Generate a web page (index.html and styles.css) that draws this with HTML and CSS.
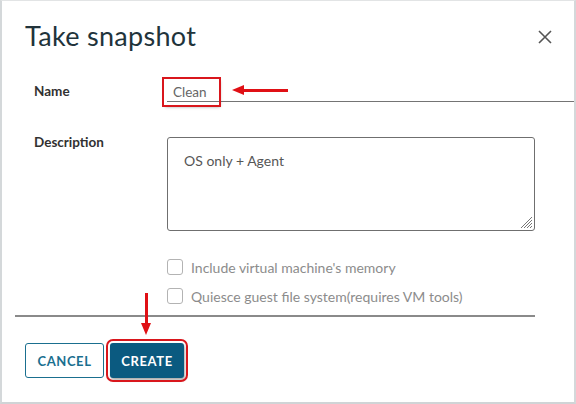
FILE: index.html
```html
<!DOCTYPE html>
<html lang="en">

<head>
    <meta charset="UTF-8">
    <title>Take snapshot</title>
    <link rel="stylesheet" href="styles.css">
</head>

<body>
    <div class="modal">
        <div class="modal-header">
            <h3 class="modal-title">Take snapshot</h3>
            <button class="close" type="button" aria-label="Close">
                <svg width="14" height="14" viewBox="0 0 14 14">
                    <path d="M1 1 L13 13 M13 1 L1 13" stroke="#555" stroke-width="1.6" fill="none"/>
                </svg>
            </button>
        </div>

        <div class="modal-body">
            <div class="form-row name-row">
                <label class="form-label">Name</label>
                <div class="name-field">
                    <span class="name-value mark">Clean</span>
                    <span class="arrow arrow-left"></span>
                </div>
            </div>

            <div class="form-row desc-row">
                <label class="form-label">Description</label>
                <div class="textarea">
                    OS only + Agent
                    <svg class="grip" width="12" height="12" viewBox="0 0 12 12">
                        <path d="M11 3 L3 11 M11 6 L6 11 M11 9 L9 11 M11 0 L0 11" stroke="#777" stroke-width="1"/>
                    </svg>
                </div>
            </div>

            <div class="checks">
                <label class="check"><span class="box"></span>Include virtual machine's memory</label>
                <label class="check"><span class="box"></span>Quiesce guest file system(requires VM tools)</label>
            </div>
        </div>

        <div class="divider"></div>

        <div class="modal-footer">
            <button class="btn btn-outline" type="button">CANCEL</button>
            <div class="create-wrap">
                <span class="arrow arrow-down"></span>
                <button class="btn btn-primary mark" type="button">CREATE</button>
            </div>
        </div>
    </div>
</body>

</html>
```

FILE: styles.css
```css
body {
    margin: 0;
    padding: 0;
    background: #fff;
    font-family: Lato, "Open Sans", sans-serif;
    color: #313131;
}

.modal {
    width: 576px;
    height: 404px;
    box-sizing: border-box;
    border-left: 2px solid #d4d8da;
    border-right: 2px solid #d4d8da;
    border-top: 1px solid #e2e4e5;
    border-bottom: 2px solid #d0d4d6;
    background: #fff;
}

.modal-header {
    display: flex;
    justify-content: space-between;
    align-items: center;
    padding: 19px 22px 0 23px;
}

.modal-title {
    margin: 0;
    font-size: 27px;
    font-weight: 400;
    line-height: 32px;
    color: #21333b;
    letter-spacing: 0.3px;
}

.close {
    border: 0;
    background: none;
    padding: 0;
    width: 14px;
    height: 14px;
    margin-top: 2px;
}

.modal-body {
    padding: 0 0 0 32px;
}

.form-row {
    display: flex;
}

.form-label {
    width: 133px;
    flex: none;
    font-size: 13.5px;
    font-weight: 700;
    color: #313131;
}

.name-row {
    margin-top: 28px;
    align-items: center;
}

.name-field {
    flex: 1;
    position: relative;
    height: 21px;
    border-bottom: 1px solid #747474;
    display: flex;
    align-items: center;
}

.name-value {
    font-size: 13.5px;
    color: #666;
    padding: 5px 12px 5px 9px;
    margin-left: -3px;
    margin-top: 3px;
}

.mark {
    outline: 2px solid #d9161c;
    outline-offset: 0;
    box-shadow: 1px 2px 3px rgba(0, 0, 0, 0.35);
}

.arrow {
    position: absolute;
    background: #e01015;
}

.arrow-left {
    left: 73px;
    top: 9px;
    width: 48px;
    height: 3px;
}

.arrow-left::before {
    content: "";
    position: absolute;
    left: -8px;
    top: -4px;
    border-right: 12px solid #e01015;
    border-top: 5.5px solid transparent;
    border-bottom: 5.5px solid transparent;
}

.desc-row {
    margin-top: 32px;
}

.textarea {
    position: relative;
    width: 368px;
    height: 94px;
    margin-top: 3px;
    box-sizing: border-box;
    border: 1px solid #6f6f6f;
    border-radius: 3px;
    padding: 14px 16px;
    font-size: 14px;
    color: #565656;
}

.grip {
    position: absolute;
    right: 1px;
    bottom: 1px;
}

.checks {
    margin: 28px 0 0 133px;
    display: flex;
    flex-direction: column;
    gap: 13px;
}

.check {
    display: flex;
    align-items: center;
    font-size: 14px;
    color: #8c8c8c;
    height: 16px;
}

.box {
    width: 14px;
    height: 14px;
    border: 1px solid #b3b3b3;
    border-radius: 3px;
    margin-right: 8px;
}

.divider {
    margin: 11px 39px 0 13px;
    height: 2px;
    background: #8a8a8a;
}

.modal-footer {
    display: flex;
    gap: 6px;
    padding: 26px 0 0 23px;
}

.btn {
    height: 35px;
    box-sizing: border-box;
    border-radius: 3px;
    font-family: Lato, "Open Sans", sans-serif;
    font-size: 13px;
    font-weight: 700;
    letter-spacing: 0.6px;
    padding: 0 10px;
}

.btn-outline {
    width: 79px;
    background: #fff;
    border: 1px solid #1a6f8f;
    color: #1a6f8f;
}

.create-wrap {
    position: relative;
}

.btn-primary {
    width: 74px;
    background: #0b5a80;
    border: 0;
    color: #fff;
    outline-offset: 2px;
}

.arrow-down {
    left: 35px;
    top: -50px;
    width: 3px;
    height: 34px;
}

.arrow-down::after {
    content: "";
    position: absolute;
    left: -4px;
    bottom: -8px;
    border-top: 12px solid #e01015;
    border-left: 5.5px solid transparent;
    border-right: 5.5px solid transparent;
}
```
